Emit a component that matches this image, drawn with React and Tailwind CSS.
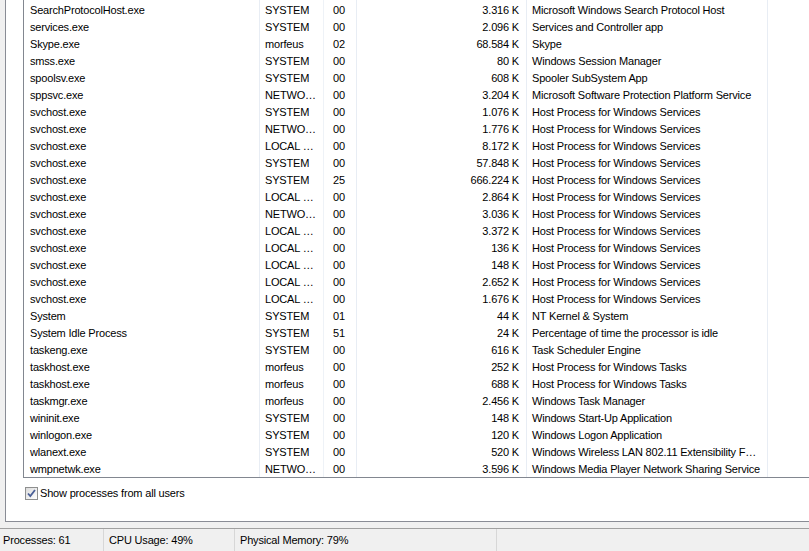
const rows = [
  ['SearchProtocolHost.exe', 'SYSTEM', '00', '3.316 K', 'Microsoft Windows Search Protocol Host'],
  ['services.exe', 'SYSTEM', '00', '2.096 K', 'Services and Controller app'],
  ['Skype.exe', 'morfeus', '02', '68.584 K', 'Skype'],
  ['smss.exe', 'SYSTEM', '00', '80 K', 'Windows Session Manager'],
  ['spoolsv.exe', 'SYSTEM', '00', '608 K', 'Spooler SubSystem App'],
  ['sppsvc.exe', 'NETWO…', '00', '3.204 K', 'Microsoft Software Protection Platform Service'],
  ['svchost.exe', 'SYSTEM', '00', '1.076 K', 'Host Process for Windows Services'],
  ['svchost.exe', 'NETWO…', '00', '1.776 K', 'Host Process for Windows Services'],
  ['svchost.exe', 'LOCAL …', '00', '8.172 K', 'Host Process for Windows Services'],
  ['svchost.exe', 'SYSTEM', '00', '57.848 K', 'Host Process for Windows Services'],
  ['svchost.exe', 'SYSTEM', '25', '666.224 K', 'Host Process for Windows Services'],
  ['svchost.exe', 'LOCAL …', '00', '2.864 K', 'Host Process for Windows Services'],
  ['svchost.exe', 'NETWO…', '00', '3.036 K', 'Host Process for Windows Services'],
  ['svchost.exe', 'LOCAL …', '00', '3.372 K', 'Host Process for Windows Services'],
  ['svchost.exe', 'LOCAL …', '00', '136 K', 'Host Process for Windows Services'],
  ['svchost.exe', 'LOCAL …', '00', '148 K', 'Host Process for Windows Services'],
  ['svchost.exe', 'LOCAL …', '00', '2.652 K', 'Host Process for Windows Services'],
  ['svchost.exe', 'LOCAL …', '00', '1.676 K', 'Host Process for Windows Services'],
  ['System', 'SYSTEM', '01', '44 K', 'NT Kernel & System'],
  ['System Idle Process', 'SYSTEM', '51', '24 K', 'Percentage of time the processor is idle'],
  ['taskeng.exe', 'SYSTEM', '00', '616 K', 'Task Scheduler Engine'],
  ['taskhost.exe', 'morfeus', '00', '252 K', 'Host Process for Windows Tasks'],
  ['taskhost.exe', 'morfeus', '00', '688 K', 'Host Process for Windows Tasks'],
  ['taskmgr.exe', 'morfeus', '00', '2.456 K', 'Windows Task Manager'],
  ['wininit.exe', 'SYSTEM', '00', '148 K', 'Windows Start-Up Application'],
  ['winlogon.exe', 'SYSTEM', '00', '120 K', 'Windows Logon Application'],
  ['wlanext.exe', 'SYSTEM', '00', '520 K', 'Windows Wireless LAN 802.11 Extensibility F…'],
  ['wmpnetwk.exe', 'NETWO…', '00', '3.596 K', 'Windows Media Player Network Sharing Service'],
];

function ProcessRow({ row }) {
  const [name, user, cpu, mem, desc] = row;
  return (
    <div className="flex h-[17px] items-center whitespace-nowrap">
      <div className="w-[236px] h-full pl-[6px] flex items-center">{name}</div>
      <div className="w-[64px] h-full pl-[5px] flex items-center">{user}</div>
      <div className="w-[33px] h-full pl-[9px] flex items-center">{cpu}</div>
      <div className="w-[170px] h-full pr-[8px] flex items-center justify-end">{mem}</div>
      <div className="w-[241px] h-full pl-[5px] flex items-center overflow-hidden">{desc}</div>
    </div>
  );
}

export default function App() {
  return (
    <div
      className="w-[809px] h-[551px] bg-[#f0f0f0] flex flex-col overflow-hidden text-[11px] tracking-[-0.18px] text-black"
      style={{ fontFamily: '"Liberation Sans", Arial, sans-serif' }}
    >
      {/* tab page */}
      <div className="ml-[5px] h-[522px] bg-white border-l border-b border-[#898c95] pl-[17px] flex flex-col">
        {/* list view */}
        <div className="relative h-[478px] border-l border-b border-[#828790] pt-[2px] overflow-hidden">
          {/* column grid lines */}
          <div className="absolute inset-0 pointer-events-none">
            <div className="absolute top-0 bottom-0 left-[235px] w-px bg-[#e8edf4]" />
            <div className="absolute top-0 bottom-0 left-[299px] w-px bg-[#eef2f7]" />
            <div className="absolute top-0 bottom-0 left-[332px] w-px bg-[#e8edf4]" />
            <div className="absolute top-0 bottom-0 left-[502px] w-px bg-[#e8edf4]" />
            <div className="absolute top-0 bottom-0 left-[743px] w-px bg-[#e8edf4]" />
          </div>
          {rows.map((r, i) => (
            <ProcessRow key={i} row={r} />
          ))}
        </div>

        <label className="flex items-center mt-[7px] ml-[2px] gap-[2px]">
          <span className="w-[13px] h-[13px] border border-[#8e8f8f] bg-gradient-to-br from-[#dcdcdc] to-white flex items-center justify-center">
            <svg width="11" height="11" viewBox="0 0 11 11">
              <path d="M2 5.5 L4.3 8 L9 2" fill="none" stroke="#4a5f97" strokeWidth="1.8" />
            </svg>
          </span>
          <span>Show processes from all users</span>
        </label>
      </div>

      {/* status bar */}
      <div className="mt-[6px] border-t border-[#a0a0a0] flex-1 flex items-center">
        <div className="w-[104px] h-full flex items-center pl-[3px] border-r border-[#d7d7d7]">Processes: 61</div>
        <div className="w-[131px] h-full flex items-center pl-[5px] border-r border-[#d7d7d7]">CPU Usage: 49%</div>
        <div className="w-[262px] h-full flex items-center pl-[5px] border-r border-[#d7d7d7]">Physical Memory: 79%</div>
        <div className="flex-1 h-full" />
      </div>
    </div>
  );
}
